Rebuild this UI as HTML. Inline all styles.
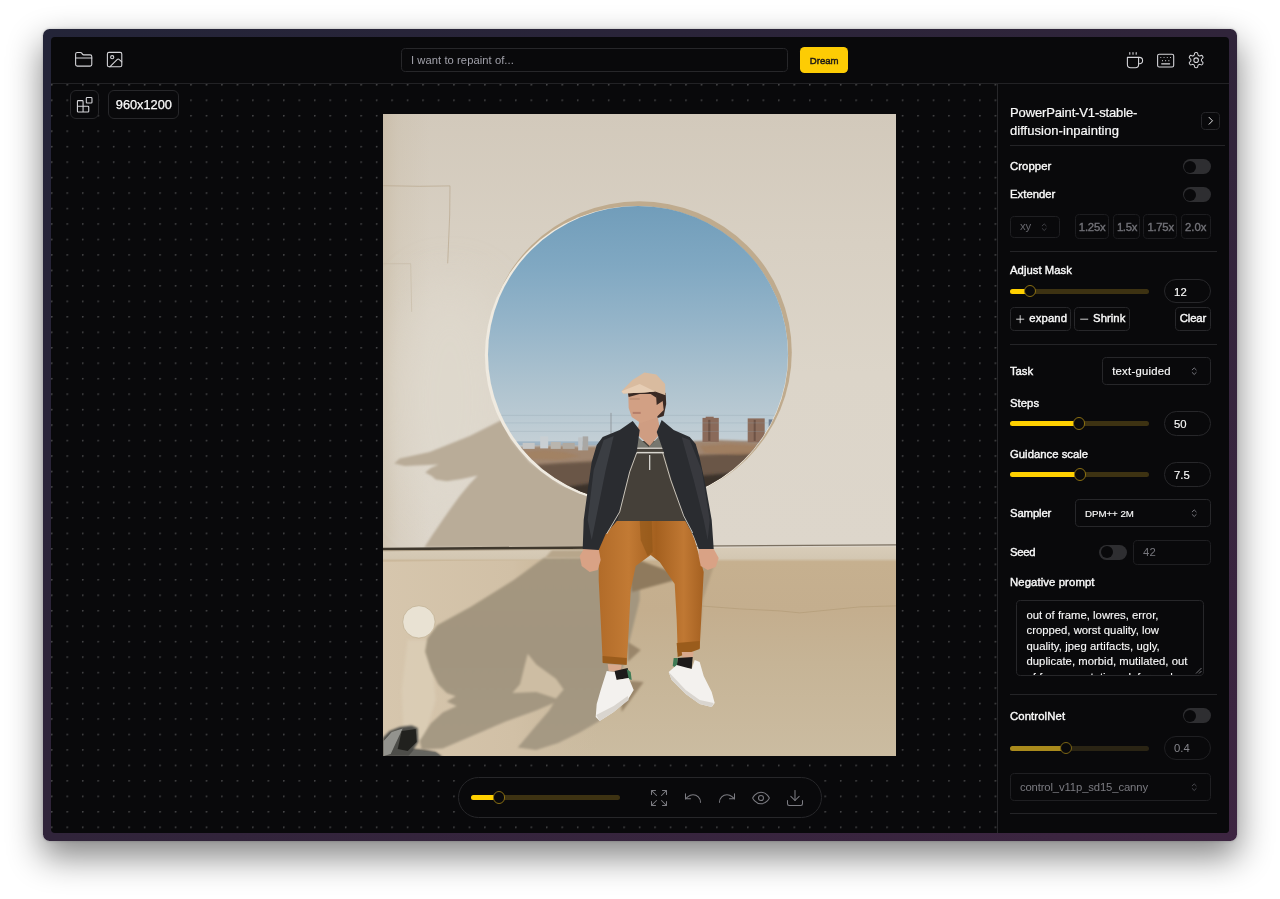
<!DOCTYPE html>
<html lang="en"><head><meta charset="utf-8"><title>IOPaint</title>
<style>
html,body{margin:0;padding:0;background:#fff}
body{width:1280px;height:899px;position:relative;overflow:hidden;font-family:"Liberation Sans", Arial, sans-serif;}
.b,.t,.i{position:absolute;box-sizing:border-box}
.t{white-space:nowrap;line-height:1}
#frame{position:absolute;left:43.1px;top:29.1px;width:1193.8px;height:812.4px;border-radius:6.5px;
 background:linear-gradient(to bottom right,#232438 0%,#30243a 50%,#3d2541 100%);
 box-shadow:0 15px 34px 1px rgba(0,0,0,.48),0 0 3px rgba(0,0,0,.22)}
#app{position:absolute;left:51.1px;top:37.2px;width:1177.8px;height:796.2px;border-radius:4px;background:#09090b;overflow:hidden}
#w{position:absolute;left:-51.1px;top:-37.2px;width:1280px;height:899px;will-change:transform}
#dots{position:absolute;left:50.8px;top:83.5px;width:947px;height:751px;
 background-image:radial-gradient(circle at 0.8px 0.8px,rgba(255,255,255,.34) 0,rgba(255,255,255,.24) .55px,rgba(255,255,255,0) 1.1px);
 background-size:15.48px 15.48px}
</style></head><body>
<div id="frame"></div>
<div id="app"><div id="w">
<div id="dots"></div>

<div class="b" style="left:51.00px;top:83.00px;width:1178.00px;height:1.0px;background:#222225"></div>
<svg class="i" style="left:73.90px;top:49.90px" width="19.4" height="19.4" viewBox="0 0 24 24" fill="none" stroke="#d6d6da" stroke-width="1.35" stroke-linecap="round" stroke-linejoin="round"><path d="M20 20a2 2 0 0 0 2-2V8a2 2 0 0 0-2-2h-7.9a2 2 0 0 1-1.69-.9L9.6 3.9A2 2 0 0 0 7.93 3H4a2 2 0 0 0-2 2v13a2 2 0 0 0 2 2Z"/><path d="M2 10h20"/></svg>
<svg class="i" style="left:105.00px;top:50.30px" width="19.2" height="19.2" viewBox="0 0 24 24" fill="none" stroke="#d6d6da" stroke-width="1.35" stroke-linecap="round" stroke-linejoin="round"><rect width="18" height="18" x="3" y="3" rx="2" ry="2"/><circle cx="9" cy="9" r="2"/><path d="m21 15-3.086-3.086a2 2 0 0 0-2.828 0L6 21"/></svg>
<div class="b" style="left:401.00px;top:47.60px;width:386.50px;height:24.80px;border-radius:4.6px;border:0.8px solid #27272a;background:#09090b;"></div>
<span class="t" id="ph" style="left:411.00px;top:55.12px;font-size:11.2px;color:#a1a1aa;letter-spacing:0.066px;font-weight:400;">I want to repaint of...</span>
<div class="b" style="left:799.90px;top:47.20px;width:48.20px;height:25.40px;border-radius:4.6px;border:0px solid #fdcc04;background:#fdcc04;"></div>
<span class="t" id="dream" style="left:809.80px;top:55.57px;font-size:9.6px;color:#1c1917;letter-spacing:0.001px;font-weight:400;-webkit-text-stroke:0.45px #1c1917;">Dream</span>
<svg class="i" style="left:1124.70px;top:50.60px" width="19.2" height="19.2" viewBox="0 0 24 24" fill="none" stroke="#d6d6da" stroke-width="1.35" stroke-linecap="round" stroke-linejoin="round"><path d="M17 8h1a4 4 0 1 1 0 8h-1"/><path d="M3 8h14v9a4 4 0 0 1-4 4H7a4 4 0 0 1-4-4Z"/><path d="M6 2v2M10 2v2M14 2v2"/></svg>
<svg class="i" style="left:1155.95px;top:50.55px" width="19.3" height="19.3" viewBox="0 0 24 24" fill="none" stroke="#d6d6da" stroke-width="1.35" stroke-linecap="round" stroke-linejoin="round"><rect width="20" height="16" x="2" y="4" rx="2"/><path d="M6 8h.01M10 8h.01M14 8h.01M18 8h.01M8 12h.01M12 12h.01M16 12h.01M7 16h10"/></svg>
<svg class="i" style="left:1187.15px;top:50.75px" width="18.3" height="18.3" viewBox="0 0 24 24" fill="none" stroke="#d6d6da" stroke-width="1.35" stroke-linecap="round" stroke-linejoin="round"><path d="M12.22 2h-.44a2 2 0 0 0-2 2v.18a2 2 0 0 1-1 1.73l-.43.25a2 2 0 0 1-2 0l-.15-.08a2 2 0 0 0-2.73.73l-.22.38a2 2 0 0 0 .73 2.73l.15.1a2 2 0 0 1 1 1.72v.51a2 2 0 0 1-1 1.74l-.15.09a2 2 0 0 0-.73 2.73l.22.38a2 2 0 0 0 2.73.73l.15-.08a2 2 0 0 1 2 0l.43.25a2 2 0 0 1 1 1.73V20a2 2 0 0 0 2 2h.44a2 2 0 0 0 2-2v-.18a2 2 0 0 1 1-1.73l.43-.25a2 2 0 0 1 2 0l.15.08a2 2 0 0 0 2.73-.73l.22-.39a2 2 0 0 0-.73-2.73l-.15-.08a2 2 0 0 1-1-1.74v-.5a2 2 0 0 1 1-1.74l.15-.09a2 2 0 0 0 .73-2.73l-.22-.38a2 2 0 0 0-2.73-.73l-.15.08a2 2 0 0 1-2 0l-.43-.25a2 2 0 0 1-1-1.73V4a2 2 0 0 0-2-2z"/><circle cx="12" cy="12" r="3"/></svg>
<div class="b" style="left:70.10px;top:90.10px;width:28.70px;height:28.90px;border-radius:6px;border:0.8px solid #27272a;background:#09090b;"></div>
<svg class="i" style="left:74.70px;top:94.80px" width="19.4" height="19.4" viewBox="0 0 24 24" fill="none" stroke="#d6d6da" stroke-width="1.35" stroke-linecap="round" stroke-linejoin="round"><rect width="7" height="7" x="14" y="3" rx="1"/><path d="M10 21V8a1 1 0 0 0-1-1H4a1 1 0 0 0-1 1v12a1 1 0 0 0 1 1h12a1 1 0 0 0 1-1v-5a1 1 0 0 0-1-1H3"/></svg>
<div class="b" style="left:108.10px;top:90.10px;width:71.10px;height:28.90px;border-radius:6px;border:0.8px solid #27272a;background:#09090b;"></div>
<span class="t" id="size" style="left:115.80px;top:98.76px;font-size:12.8px;color:#fafafa;letter-spacing:-0.014px;font-weight:400;-webkit-text-stroke:0.25px #fafafa;">960x1200</span>
<svg class="i" id="photo" style="left:383.3px;top:114.1px" width="513.1" height="642.2" viewBox="383.3 114.1 513.1 642.2" preserveAspectRatio="none">
<defs>
<linearGradient id="gsky" gradientUnits="userSpaceOnUse" x1="0" y1="206" x2="0" y2="446">
 <stop offset="0" stop-color="#719dba"/><stop offset=".25" stop-color="#80a8c2"/><stop offset=".5" stop-color="#96b5c9"/><stop offset=".75" stop-color="#aec3cf"/><stop offset="1" stop-color="#c5d0d6"/></linearGradient>
<linearGradient id="gwall" gradientUnits="userSpaceOnUse" x1="0" y1="114" x2="0" y2="548">
 <stop offset="0" stop-color="#d2c9bb"/><stop offset=".3" stop-color="#d8d0c3"/><stop offset=".6" stop-color="#dcd5c9"/><stop offset="1" stop-color="#ddd6cb"/></linearGradient>
<linearGradient id="gwl" gradientUnits="userSpaceOnUse" x1="383" y1="0" x2="430" y2="0">
 <stop offset="0" stop-color="#bfae92" stop-opacity=".42"/><stop offset=".35" stop-color="#c6b8a0" stop-opacity=".22"/><stop offset="1" stop-color="#c6b8a0" stop-opacity="0"/></linearGradient>
<linearGradient id="glow" gradientUnits="userSpaceOnUse" x1="0" y1="548" x2="0" y2="757">
 <stop offset="0" stop-color="#d8ccb8"/><stop offset=".05" stop-color="#d3c7b2"/><stop offset=".066" stop-color="#c6b08f"/><stop offset=".3" stop-color="#c4ae8e"/><stop offset=".55" stop-color="#c6b496"/><stop offset="1" stop-color="#cbbca1"/></linearGradient>
<linearGradient id="gshl" gradientUnits="userSpaceOnUse" x1="0" y1="548" x2="0" y2="757">
 <stop offset="0" stop-color="#a5977f"/><stop offset=".5" stop-color="#a2957f"/><stop offset="1" stop-color="#a69a84"/></linearGradient>
<linearGradient id="gll" gradientUnits="userSpaceOnUse" x1="383" y1="0" x2="600" y2="0">
 <stop offset="0" stop-color="#d6c6ad"/><stop offset=".6" stop-color="#d1c0a6"/><stop offset="1" stop-color="#cdbca2" stop-opacity="0"/></linearGradient>
<linearGradient id="gpants" gradientUnits="userSpaceOnUse" x1="596" y1="0" x2="706" y2="0">
 <stop offset="0" stop-color="#b06a28"/><stop offset=".3" stop-color="#c27a34"/><stop offset=".55" stop-color="#a4601f"/><stop offset=".8" stop-color="#c07833"/><stop offset="1" stop-color="#a25e1f"/></linearGradient>
<clipPath id="ccirc"><ellipse cx="638.3" cy="354.5" rx="150" ry="148.5"/></clipPath>
<clipPath id="cphoto"><rect x="383.3" y="114.1" width="513.1" height="642.2"/></clipPath>
<filter id="b1" x="-10%" y="-10%" width="120%" height="120%"><feGaussianBlur stdDeviation="0.9"/></filter>
<filter id="b2" x="-10%" y="-10%" width="120%" height="120%"><feGaussianBlur stdDeviation="1.8"/></filter>
<filter id="b6" x="-60%" y="-60%" width="220%" height="220%"><feGaussianBlur stdDeviation="22"/></filter>
</defs>
<g clip-path="url(#cphoto)">
<!-- upper wall -->
<rect x="383" y="114" width="514" height="436" fill="url(#gwall)"/>
<rect x="383" y="114" width="50" height="436" fill="url(#gwl)"/>
<ellipse cx="450" cy="400" rx="60" ry="120" fill="#e0dacf" opacity=".6" filter="url(#b6)"/>
<!-- plaster patch lines -->
<path d="M383.500 185.800 420 186.400 450.300 186 450 215 448 263.500" fill="none" stroke="#b9a88f" stroke-width=".9" opacity=".8"/>
<path d="M383.500 263.800H411L412 312" fill="none" stroke="#c4b7a2" stroke-width=".8" opacity=".7"/>
<!-- shadow on the upper wall (person + cap) -->
<polygon filter="url(#b1)" fill="#b9ac98" points="503.0,419.5 470.0,436.0 430.0,452.0 400.0,458.5 394.5,463.5 405.0,466.0 439.0,464.5 431.0,468.0 425.5,472.5 432.0,476.0 436.0,479.5 447.0,481.3 462.0,479.0 478.0,475.5 470.0,484.0 460.0,496.0 445.0,517.0 432.0,536.0 424.5,547.5 600.0,547.5 600.0,500.0 560.0,484.0 530.0,462.0 512.0,440.0"/>
<!-- round opening -->
<ellipse cx="639.5" cy="352.3" rx="152.6" ry="150.9" fill="#bfab8e"/>
<ellipse cx="636.8" cy="355.4" rx="151.6" ry="149.4" fill="#efeae0"/>
<ellipse cx="638.3" cy="354.5" rx="150" ry="148.5" fill="url(#gsky)"/>
<g clip-path="url(#ccirc)">
 <!-- distant water / haze -->
 <rect x="480" y="441.500" width="320" height="4" fill="#9fb4c4"/>
 <!-- trees -->
 <path filter="url(#b1)" fill="#a08670" d="M480 450 500 448 520 447 540 446 560 445.500 580 446.500 600 446 700 441 720 440 745 441 770 442 800 441V520H480Z"/>
 <path filter="url(#b2)" fill="#6b5746" d="M480 470 520 466 560 463 600 461 700 455 740 453 800 452V520H480Z"/>
 <path filter="url(#b2)" fill="#3a3129" d="M520 500 560 488 600 482 700 476 760 470V520H520Z"/>
 <path filter="url(#b1)" fill="#a3805f" d="M520 452 545 450 565 452 580 456 560 460 530 459Z" opacity=".7"/>
 <path filter="url(#b1)" fill="#a07c5c" d="M700 446 730 444 760 446 770 452 740 455 705 453Z" opacity=".7"/>
 <!-- buildings -->
 <rect x="702.800" y="418" width="16.300" height="24" fill="#8a6a5a"/><rect x="706" y="416.800" width="8" height="3" fill="#8a6a5a"/>
 <rect x="708.500" y="420" width="2.200" height="21" fill="#6d5245"/>
 <rect x="748" y="418.500" width="17" height="24" fill="#8c6d5c"/><rect x="754" y="420" width="2" height="21" fill="#6d5245"/>
 <rect x="769" y="419.500" width="5" height="18" fill="#6f7f93"/>
 <rect x="540.500" y="436.500" width="8" height="12" fill="#c9cfd3"/><rect x="551" y="442" width="10" height="7" fill="#b9b5ae"/>
 <rect x="578.500" y="437.500" width="4.500" height="13" fill="#bfc3c6"/><rect x="583" y="436.500" width="5.500" height="14" fill="#a9a7a4"/>
 <rect x="523" y="443" width="12" height="6" fill="#c5c6c6"/><rect x="563" y="443" width="12" height="6" fill="#b0a9a0"/>
 <!-- power lines -->
 <path d="M500 415.500H800M500 423H800M500 431.500H800" stroke="#8d9fae" stroke-width=".5" opacity=".55"/>
 <rect x="610.800" y="413" width="1" height="24" fill="#8a8f93" opacity=".8"/>
</g>
<!-- ledge + lower wall -->
<polygon points="383.0,550.2 897.0,546.6 897.0,757.0 383.0,757.0" fill="url(#glow)"/>
<!-- light left part of lower wall -->
<polygon points="383,561.5 600,560 600,757 383,757" fill="url(#gll)"/>
<path filter="url(#b2)" fill="#dccfb8" opacity=".75" d="M408 640 430 640 436 700 424 740 404 740 402 690Z"/>
<!-- lower wall big shadow -->
<path filter="url(#b1)" fill="url(#gshl)" d="M544 558 640 557 640 600 615 700 599 721.500 580 732.500 558.500 743 536.500 750 518 747.500 523.500 741 536.500 725.500 549.500 710.500 554 703 536.500 710.500 506 721.500 471 736.500 443 748.500 422 749.500 420 741 431 723.500 443 712.500 457 706 447 701.700 456 696.300 447 693 438.500 684.300 431 669 425.400 651.600 427.600 638.500 437.400 625.400 471.200 606.900 514.800 579.600Z"/>
<!-- light notch (bird shape) inside the shadow -->
<path filter="url(#b1)" fill="#cdbda3" d="M528 653.800 536.600 664.700 556.300 678.800 563.900 689.700 556.300 698.500 536.600 692 512.700 693 520.300 684.300 523.600 671.200Z"/>
<!-- shadows behind legs -->
<path filter="url(#b1)" fill="#8f7a5d" d="M628 556 672 572 676 580 632 592Z"/>
<path filter="url(#b1)" fill="#9a866a" d="M628 642 641 650 628 662Z"/>
<path filter="url(#b1)" fill="#9a866a" d="M620 680 644 682 622 712Z"/>
<path filter="url(#b1)" fill="#a08c70" d="M700 556 716 560 703 600 700 640Z" opacity=".55"/>
<!-- ledge line -->
<polygon points="383.0,547.8 600.0,546.4 600.0,548.9 383.0,550.4" fill="#3f382d"/>
<polygon points="383.0,550.4 600.0,548.9 600.0,549.8 383.0,551.4" fill="#9b8a70" opacity=".7"/>
<polygon points="690.0,545.6 897.0,544.4 897.0,545.7 690.0,546.9" fill="#7b7061"/>
<!-- crack on right lower wall -->
<path d="M700 606 740 609 780 611 800 613 830 610 860 607 897 606" fill="none" stroke="#b39c78" stroke-width="1" opacity=".7"/>
<!-- white plug -->
<circle cx="419.200" cy="622" r="16.200" fill="#e9e2d3"/>
<circle cx="419.200" cy="622" r="16.200" fill="none" stroke="#c3b296" stroke-width=".8"/>
<!-- bag -->
<path filter="url(#b1)" fill="#4e4e49" d="M383 757V738L390 731 400 727 412 725.500 418 728 418.500 742 414 749 425 750 436 752 443 757Z"/>
<path fill="#a0a09a" d="M384 741 392 732 403 728.500 398 739 391 754 384 756Z" opacity=".85"/>
<path fill="#1d1d1a" d="M402 731 416 729 417 742 408 751 398 749Z" opacity=".9"/>
<path fill="#6a6a65" d="M414 750 436 752.500 442 757 408 757Z" opacity=".8"/>
<!-- ledge strip in shadow -->
<polygon points="552,550.3 600,550 600,558 545,558.3" fill="#b7a68b" filter="url(#b1)"/>
<!-- ===== person ===== -->
<!-- pants -->
<path fill="url(#gpants)" d="M616 518 686 518 695 540 704 572 702 610 700 648 678 652 677 620 675 584 660 562 651 555 636 566 631 590 629 630 627 664 603 662 601 620 599 580 599 549 606 530Z"/>
<path fill="#8e5518" d="M640 520 652 520 653 552 648 556 641 540Z" opacity=".6"/>
<path fill="#9a5c1c" d="M603 656 627 658 627 665 603 663Z"/><path fill="#9a5c1c" d="M677 643 700 641 700 649 678 657Z"/>
<!-- ankles / socks -->
<path fill="#d9a98c" d="M608 664 622 665 621 672 609 671Z"/>
<path fill="#1d1b1a" d="M615 671 628 668 630 678 616 680Z"/>
<path fill="#d9a98c" d="M682 652 694 652 693 658 683 658Z"/>
<path fill="#1d1b1a" d="M678 658 693 657 692 669 677 667Z"/>
<path fill="#3f7a55" d="M674 658 678 658 677 668 673 666Z"/><path fill="#3f7a55" d="M627 669 631 672 632 680 629 679Z"/>
<!-- shoes -->
<path fill="#f3f1ee" d="M607 671 615 672 617 680 629 678 634 690 628 700 614 712 600 721 596 717 597 704 601 690Z"/>
<path fill="#d9d5cf" d="M596.500 715 614 706 628 696 629 700 614 712 600 721Z"/>
<path fill="#f3f1ee" d="M677 665 692 669 695 660 700 662 704 676 712 692 715 703 712 707 700 704 686 694 672 680 669 672Z"/>
<path fill="#d9d5cf" d="M669 672 686 690 700 700 714 703 712 707 700 704 686 694 672 680Z"/>
<!-- hands -->
<path fill="#d9a285" d="M584 549 599 549 601 560 598 570 590 572 582 566 580 556Z"/>
<path fill="#d9a285" d="M699 548 714 549 719 558 716 567 708 570 701 566 699 556Z"/>
<!-- inner shirt -->
<path fill="#454039" d="M630 441 670 441 680 480 692 521 612 521 624 480Z"/>
<path fill="#77776f" d="M634 433 649 447 664 432 668 447 633 447Z"/>
<rect x="636" y="447.500" width="30" height="1.500" fill="#d9d6cf"/><rect x="636" y="452" width="30" height="1.500" fill="#d9d6cf"/>
<!-- neck -->
<path fill="#cf9d82" d="M640 420 658 417 661 433 650 446 637 434Z"/>
<!-- jacket -->
<path fill="#2a2c30" d="M633 421 640 430 637 452 630 470 618 520 606 534 599 550 583 549 584 520 588 490 592 462 597 445 603 437 620 430Z"/>
<path fill="#2a2c30" d="M662 420 657 432 664 452 672 480 684 518 694 536 699 549 714 549 712 520 706 486 700 458 696 444 690 437 674 430Z"/>
<path fill="#43464b" d="M604 440 614 436 606 470 596 520 592 540 588 520 594 470Z" opacity=".7"/>
<path fill="#43464b" d="M690 440 682 437 694 480 704 520 708 540 710 520 702 470Z" opacity=".55"/>
<path d="M637 453 630 472 620 512 607 534" fill="none" stroke="#c9c4ba" stroke-width="1"/>
<path d="M663 453 671 480 684 516 693 533" fill="none" stroke="#c9c4ba" stroke-width="1"/>
<path d="M650 455V470" stroke="#e4e2dd" stroke-width="1.200"/>
<!-- head -->
<path fill="#3a2a24" d="M655 389 666 393 666.500 404 664 416 658 418 654 405Z"/>
<path fill="#d2a084" d="M628.500 392 656 390 657 405 663 401 664 410 656 418 641 423 632 417 629 408Z"/>
<path fill="#3a2a24" d="M628 392 640 391 656 391 657 398 651 394 640 394 629 397Z"/>
<path fill="#b98a70" d="M630 398 640 398 640 400 630 400Z" opacity=".7"/><path fill="#a86f5f" d="M633 412 641 412 641 414 633 414Z" opacity=".7"/>
<!-- cap -->
<path fill="#d9bb9f" d="M621.800 391.400 632.700 380 644.700 372.700 656.700 374.700 665.400 384 665.800 395.400 655.400 391.500 644.700 392.500 623.400 393.600Z"/>
<path fill="#e6cdb4" d="M621.800 391.400 640 384 655.400 391.500 644.700 392.500 623.400 393.600Z"/>
</g>
</svg>
<div class="b" style="left:458.10px;top:776.70px;width:363.50px;height:41.40px;border-radius:21px;border:0.8px solid #27272a;background:#09090b;"></div>
<div class="b" style="left:471.10px;top:795.20px;width:148.90px;height:4.8px;border-radius:4.8px;background:#3d3212"></div><div class="b" style="left:471.10px;top:795.20px;width:28.20px;height:4.8px;border-radius:4.8px 0 0 4.8px;background:#ffd000"></div><div class="b" style="left:493.10px;top:791.40px;width:12.4px;height:12.4px;border-radius:50%;border:1.1px solid #8a6f12;background:#09090b"></div>
<svg class="i" style="left:648.60px;top:787.70px" width="20" height="20" viewBox="0 0 24 24" fill="none" stroke="#7c7c82" stroke-width="1.25" stroke-linecap="round" stroke-linejoin="round"><path d="m21 21-6-6m6 6v-4.8m0 4.8h-4.8M3 16.200V21m0 0h4.8M3 21l6-6M21 7.800V3m0 0h-4.8M21 3l-6 6M3 7.800V3m0 0h4.8M3 3l6 6"/></svg>
<svg class="i" style="left:682.50px;top:787.70px" width="20" height="20" viewBox="0 0 24 24" fill="none" stroke="#7c7c82" stroke-width="1.25" stroke-linecap="round" stroke-linejoin="round"><path d="M3 7v6h6"/><path d="M21 17a9 9 0 0 0-9-9 9 9 0 0 0-6 2.300L3 13"/></svg>
<svg class="i" style="left:716.70px;top:787.70px" width="20" height="20" viewBox="0 0 24 24" fill="none" stroke="#7c7c82" stroke-width="1.25" stroke-linecap="round" stroke-linejoin="round"><path d="M21 7v6h-6"/><path d="M3 17a9 9 0 0 1 9-9 9 9 0 0 1 6 2.300l3 2.700"/></svg>
<svg class="i" style="left:750.60px;top:787.70px" width="20" height="20" viewBox="0 0 24 24" fill="none" stroke="#7c7c82" stroke-width="1.25" stroke-linecap="round" stroke-linejoin="round"><path d="M2 12s3-7 10-7 10 7 10 7-3 7-10 7-10-7-10-7Z"/><circle cx="12" cy="12" r="3"/></svg>
<svg class="i" style="left:784.70px;top:787.70px" width="20" height="20" viewBox="0 0 24 24" fill="none" stroke="#7c7c82" stroke-width="1.25" stroke-linecap="round" stroke-linejoin="round"><path d="M21 15v4a2 2 0 0 1-2 2H5a2 2 0 0 1-2-2v-4"/><path d="m7 10 5 5 5-5"/><path d="M12 15V3"/></svg>
<div class="b" style="left:997.2px;top:83.5px;width:232px;height:751px;background:#09090b;border-left:.9px solid #27272a"></div>
<span class="t" id="t1" style="left:1010.00px;top:105.90px;font-size:13px;color:#fafafa;letter-spacing:-0.136px;font-weight:400;-webkit-text-stroke:0.2px #fafafa;">PowerPaint-V1-stable-</span>
<span class="t" id="t2" style="left:1010.00px;top:124.10px;font-size:13px;color:#fafafa;letter-spacing:0.043px;font-weight:400;-webkit-text-stroke:0.2px #fafafa;">diffusion-inpainting</span>
<div class="b" style="left:1201.30px;top:111.60px;width:18.40px;height:18.40px;border-radius:4.6px;border:0.8px solid #27272a;background:transparent;"></div>
<svg class="i" style="left:1203.90px;top:114.20px" width="13.6" height="13.6" viewBox="0 0 24 24" fill="none" stroke="#fafafa" stroke-width="1.6" stroke-linecap="round" stroke-linejoin="round"><path d="m9 18 6-6-6-6"/></svg>
<div class="b" style="left:1010.00px;top:145.45px;width:215.30px;height:0.9px;background:#242427"></div>
<span class="t" id="cropper" style="left:1010.00px;top:161.13px;font-size:11.3px;color:#fafafa;letter-spacing:0.091px;font-weight:400;-webkit-text-stroke:0.38px #fafafa;">Cropper</span>
<div class="b" style="left:1182.50px;top:158.90px;width:28px;height:15.2px;border-radius:15.2px;background:#2e2e31"></div><div class="b" style="left:1184.10px;top:160.50px;width:12.0px;height:12.0px;border-radius:50%;background:#09090b"></div>
<span class="t" id="extender" style="left:1010.00px;top:189.23px;font-size:11.3px;color:#fafafa;letter-spacing:0.021px;font-weight:400;-webkit-text-stroke:0.38px #fafafa;">Extender</span>
<div class="b" style="left:1182.50px;top:186.90px;width:28px;height:15.2px;border-radius:15.2px;background:#2e2e31"></div><div class="b" style="left:1184.10px;top:188.50px;width:12.0px;height:12.0px;border-radius:50%;background:#09090b"></div>
<div class="b" style="left:1010.00px;top:215.90px;width:50.30px;height:21.90px;border-radius:4.6px;border:0.8px solid #1f1f22;background:transparent;"></div>
<span class="t" id="xy" style="left:1019.90px;top:221.23px;font-size:11.3px;color:#66666c;letter-spacing:0.000px;font-weight:400;">xy</span>
<svg class="i" style="left:1037.90px;top:220.80px" width="12.4" height="12.4" viewBox="0 0 15 15" fill="none" stroke="#4a4a50" stroke-width="1.0" stroke-linecap="round" stroke-linejoin="round"><path d="M5.1 5.9 7.5 3.5 9.9 5.9M5.1 9.1 7.5 11.5 9.9 9.1"/></svg>
<div class="b" style="left:1074.70px;top:214.40px;width:34.70px;height:24.70px;border-radius:4.6px;border:0.8px solid #1d1d20;background:transparent;"></div>
<span class="t" id="b125" style="left:1078.80px;top:222.13px;font-size:11.3px;color:#727278;letter-spacing:-0.200px;font-weight:400;-webkit-text-stroke:0.38px #727278;">1.25x</span>
<div class="b" style="left:1112.60px;top:214.40px;width:27.70px;height:24.70px;border-radius:4.6px;border:0.8px solid #1d1d20;background:transparent;"></div>
<span class="t" id="b15" style="left:1116.90px;top:222.13px;font-size:11.3px;color:#727278;letter-spacing:-0.300px;font-weight:400;-webkit-text-stroke:0.38px #727278;">1.5x</span>
<div class="b" style="left:1143.10px;top:214.40px;width:34.30px;height:24.70px;border-radius:4.6px;border:0.8px solid #1d1d20;background:transparent;"></div>
<span class="t" id="b175" style="left:1147.40px;top:222.13px;font-size:11.3px;color:#727278;letter-spacing:-0.250px;font-weight:400;-webkit-text-stroke:0.38px #727278;">1.75x</span>
<div class="b" style="left:1180.60px;top:214.40px;width:30.00px;height:24.70px;border-radius:4.6px;border:0.8px solid #1d1d20;background:transparent;"></div>
<span class="t" id="b20" style="left:1185.00px;top:222.13px;font-size:11.3px;color:#727278;letter-spacing:0.000px;font-weight:400;-webkit-text-stroke:0.38px #727278;">2.0x</span>
<div class="b" style="left:1010.00px;top:251.45px;width:206.60px;height:0.9px;background:#242427"></div>
<span class="t" id="adjust" style="left:1010.00px;top:265.13px;font-size:11.3px;color:#fafafa;letter-spacing:0.037px;font-weight:400;-webkit-text-stroke:0.38px #fafafa;">Adjust Mask</span>
<div class="b" style="left:1010.00px;top:288.80px;width:139.10px;height:4.8px;border-radius:4.8px;background:#3d3212"></div><div class="b" style="left:1010.00px;top:288.80px;width:20.20px;height:4.8px;border-radius:4.8px 0 0 4.8px;background:#ffd000"></div><div class="b" style="left:1024.00px;top:285.00px;width:12.4px;height:12.4px;border-radius:50%;border:1.1px solid #8a6f12;background:#09090b"></div>
<div class="b" style="left:1163.80px;top:279.00px;width:46.80px;height:24.40px;border-radius:12.3px;border:0.8px solid #27272a;background:transparent;"></div>
<span class="t" id="n12" style="left:1174.10px;top:286.53px;font-size:11.3px;color:#fafafa;letter-spacing:0.000px;font-weight:400;-webkit-text-stroke:0.15px #fafafa;">12</span>
<div class="b" style="left:1010.00px;top:306.60px;width:60.60px;height:24.70px;border-radius:4.6px;border:0.8px solid #27272a;background:transparent;"></div>
<svg class="i" style="left:1013.80px;top:312.70px" width="12.4" height="12.4" viewBox="0 0 24 24" fill="none" stroke="#fafafa" stroke-width="1.6" stroke-linecap="round" stroke-linejoin="round"><path d="M5 12h14M12 5v14"/></svg>
<span class="t" id="expandt" style="left:1029.30px;top:313.43px;font-size:11.3px;color:#fafafa;letter-spacing:0.144px;font-weight:400;-webkit-text-stroke:0.38px #fafafa;">expand</span>
<div class="b" style="left:1073.80px;top:306.60px;width:55.80px;height:24.70px;border-radius:4.6px;border:0.8px solid #27272a;background:transparent;"></div>
<svg class="i" style="left:1077.80px;top:312.70px" width="12.4" height="12.4" viewBox="0 0 24 24" fill="none" stroke="#fafafa" stroke-width="1.6" stroke-linecap="round" stroke-linejoin="round"><path d="M5 12h14"/></svg>
<span class="t" id="shrink" style="left:1093.10px;top:313.43px;font-size:11.3px;color:#fafafa;letter-spacing:0.046px;font-weight:400;-webkit-text-stroke:0.38px #fafafa;">Shrink</span>
<div class="b" style="left:1175.40px;top:306.60px;width:35.20px;height:24.70px;border-radius:4.6px;border:0.8px solid #27272a;background:transparent;"></div>
<span class="t" id="clear" style="left:1179.70px;top:313.43px;font-size:11.3px;color:#fafafa;letter-spacing:-0.108px;font-weight:400;-webkit-text-stroke:0.38px #fafafa;">Clear</span>
<div class="b" style="left:1010.00px;top:343.95px;width:206.60px;height:0.9px;background:#242427"></div>
<span class="t" id="task" style="left:1010.00px;top:365.83px;font-size:11.3px;color:#fafafa;letter-spacing:-0.060px;font-weight:400;-webkit-text-stroke:0.38px #fafafa;">Task</span>
<div class="b" style="left:1102.30px;top:357.20px;width:108.30px;height:27.60px;border-radius:4.6px;border:0.8px solid #27272a;background:transparent;"></div>
<span class="t" id="tg" style="left:1112.20px;top:365.83px;font-size:11.3px;color:#fafafa;letter-spacing:0.249px;font-weight:400;-webkit-text-stroke:0.15px #fafafa;">text-guided</span>
<svg class="i" style="left:1187.90px;top:364.80px" width="12.4" height="12.4" viewBox="0 0 15 15" fill="none" stroke="#8b8b92" stroke-width="1.0" stroke-linecap="round" stroke-linejoin="round"><path d="M5.1 5.9 7.5 3.5 9.9 5.9M5.1 9.1 7.5 11.5 9.9 9.1"/></svg>
<span class="t" id="steps" style="left:1010.00px;top:397.73px;font-size:11.3px;color:#fafafa;letter-spacing:0.040px;font-weight:400;-webkit-text-stroke:0.38px #fafafa;">Steps</span>
<div class="b" style="left:1010.00px;top:421.10px;width:139.10px;height:4.8px;border-radius:4.8px;background:#3d3212"></div><div class="b" style="left:1010.00px;top:421.10px;width:68.90px;height:4.8px;border-radius:4.8px 0 0 4.8px;background:#ffd000"></div><div class="b" style="left:1072.70px;top:417.30px;width:12.4px;height:12.4px;border-radius:50%;border:1.1px solid #8a6f12;background:#09090b"></div>
<div class="b" style="left:1163.80px;top:411.00px;width:46.80px;height:24.60px;border-radius:12.3px;border:0.8px solid #27272a;background:transparent;"></div>
<span class="t" id="n50" style="left:1174.00px;top:418.73px;font-size:11.3px;color:#fafafa;letter-spacing:0.000px;font-weight:400;-webkit-text-stroke:0.15px #fafafa;">50</span>
<span class="t" id="guid" style="left:1010.00px;top:448.73px;font-size:11.3px;color:#fafafa;letter-spacing:0.016px;font-weight:400;-webkit-text-stroke:0.38px #fafafa;">Guidance scale</span>
<div class="b" style="left:1010.00px;top:472.25px;width:139.10px;height:4.8px;border-radius:4.8px;background:#3d3212"></div><div class="b" style="left:1010.00px;top:472.25px;width:69.80px;height:4.8px;border-radius:4.8px 0 0 4.8px;background:#ffd000"></div><div class="b" style="left:1073.60px;top:468.45px;width:12.4px;height:12.4px;border-radius:50%;border:1.1px solid #8a6f12;background:#09090b"></div>
<div class="b" style="left:1163.80px;top:462.20px;width:46.80px;height:24.50px;border-radius:12.3px;border:0.8px solid #27272a;background:transparent;"></div>
<span class="t" id="n75" style="left:1174.00px;top:469.93px;font-size:11.3px;color:#fafafa;letter-spacing:0.000px;font-weight:400;-webkit-text-stroke:0.15px #fafafa;">7.5</span>
<span class="t" id="sampler" style="left:1010.00px;top:508.23px;font-size:11.3px;color:#fafafa;letter-spacing:-0.117px;font-weight:400;-webkit-text-stroke:0.38px #fafafa;">Sampler</span>
<div class="b" style="left:1075.30px;top:499.30px;width:135.30px;height:27.60px;border-radius:4.6px;border:0.8px solid #27272a;background:transparent;"></div>
<span class="t" id="dpm" style="left:1085.00px;top:508.79px;font-size:9.7px;color:#fafafa;letter-spacing:-0.024px;font-weight:400;-webkit-text-stroke:0.15px #fafafa;">DPM++ 2M</span>
<svg class="i" style="left:1187.90px;top:506.90px" width="12.4" height="12.4" viewBox="0 0 15 15" fill="none" stroke="#8b8b92" stroke-width="1.0" stroke-linecap="round" stroke-linejoin="round"><path d="M5.1 5.9 7.5 3.5 9.9 5.9M5.1 9.1 7.5 11.5 9.9 9.1"/></svg>
<span class="t" id="seed" style="left:1010.00px;top:546.73px;font-size:11.3px;color:#fafafa;letter-spacing:-0.267px;font-weight:400;-webkit-text-stroke:0.38px #fafafa;">Seed</span>
<div class="b" style="left:1099.00px;top:544.60px;width:28px;height:15.2px;border-radius:15.2px;background:#2e2e31"></div><div class="b" style="left:1100.60px;top:546.20px;width:12.0px;height:12.0px;border-radius:50%;background:#09090b"></div>
<div class="b" style="left:1133.20px;top:539.60px;width:77.40px;height:25.20px;border-radius:4.6px;border:0.8px solid #1f1f22;background:transparent;"></div>
<span class="t" id="n42" style="left:1143.10px;top:547.13px;font-size:11.3px;color:#77777d;letter-spacing:0.000px;font-weight:400;">42</span>
<span class="t" id="neg" style="left:1010.00px;top:577.33px;font-size:11.3px;color:#fafafa;letter-spacing:0.111px;font-weight:400;-webkit-text-stroke:0.38px #fafafa;">Negative prompt</span>
<div class="b" style="left:1016.2px;top:600.3px;width:187.9px;height:75.4px;border-radius:4.6px;border:.8px solid #27272a;overflow:hidden">
<span class="t" id="l1" style="left:9.30px;top:8.23px;font-size:11.3px;color:#fafafa;letter-spacing:0.003px;font-weight:400;-webkit-text-stroke:0.12px #fafafa;">out of frame, lowres, error,</span>
<span class="t" id="l2" style="left:9.30px;top:23.73px;font-size:11.3px;color:#fafafa;letter-spacing:0.007px;font-weight:400;-webkit-text-stroke:0.12px #fafafa;">cropped, worst quality, low</span>
<span class="t" id="l3" style="left:9.30px;top:39.23px;font-size:11.3px;color:#fafafa;letter-spacing:0.062px;font-weight:400;-webkit-text-stroke:0.12px #fafafa;">quality, jpeg artifacts, ugly,</span>
<span class="t" id="l4" style="left:9.30px;top:54.73px;font-size:11.3px;color:#fafafa;letter-spacing:0.025px;font-weight:400;-webkit-text-stroke:0.12px #fafafa;">duplicate, morbid, mutilated, out</span>
<span class="t" id="l5" style="left:9.30px;top:70.23px;font-size:11.3px;color:#fafafa;letter-spacing:0.042px;font-weight:400;-webkit-text-stroke:0.12px #fafafa;">of frame, mutation, deformed</span>
<svg class="i" style="right:1px;bottom:1px" width="7" height="7" viewBox="0 0 7 7" stroke="#8a8a90" stroke-width=".8" fill="none"><path d="M6.500 1 1 6.500M6.500 4 4 6.500"/></svg>
</div>
<div class="b" style="left:1010.00px;top:693.85px;width:206.60px;height:0.9px;background:#242427"></div>
<span class="t" id="cnet" style="left:1010.00px;top:710.63px;font-size:11.3px;color:#fafafa;letter-spacing:0.116px;font-weight:400;-webkit-text-stroke:0.38px #fafafa;">ControlNet</span>
<div class="b" style="left:1182.50px;top:708.00px;width:28px;height:15.2px;border-radius:15.2px;background:#2e2e31"></div><div class="b" style="left:1184.10px;top:709.60px;width:12.0px;height:12.0px;border-radius:50%;background:#09090b"></div>
<div class="b" style="left:1010.00px;top:745.80px;width:139.10px;height:4.8px;border-radius:4.8px;background:#2a2414"></div><div class="b" style="left:1010.00px;top:745.80px;width:56.00px;height:4.8px;border-radius:4.8px 0 0 4.8px;background:#a98a1c"></div><div class="b" style="left:1059.80px;top:742.00px;width:12.4px;height:12.4px;border-radius:50%;border:1.1px solid #7a6414;background:#09090b"></div>
<div class="b" style="left:1163.80px;top:735.70px;width:46.80px;height:24.60px;border-radius:12.3px;border:0.8px solid #1f1f22;background:transparent;"></div>
<span class="t" id="n04" style="left:1174.00px;top:743.03px;font-size:11.3px;color:#85858b;letter-spacing:0.000px;font-weight:400;">0.4</span>
<div class="b" style="left:1010.00px;top:773.20px;width:200.60px;height:27.40px;border-radius:4.6px;border:0.8px solid #1f1f22;background:transparent;"></div>
<span class="t" id="cn" style="left:1019.90px;top:781.83px;font-size:11.3px;color:#7b7b81;letter-spacing:-0.132px;font-weight:400;">control_v11p_sd15_canny</span>
<svg class="i" style="left:1187.90px;top:780.80px" width="12.4" height="12.4" viewBox="0 0 15 15" fill="none" stroke="#55555b" stroke-width="1.0" stroke-linecap="round" stroke-linejoin="round"><path d="M5.1 5.9 7.5 3.5 9.9 5.9M5.1 9.1 7.5 11.5 9.9 9.1"/></svg>
<div class="b" style="left:1010.00px;top:813.05px;width:206.60px;height:0.9px;background:#242427"></div>
</div></div>
</body></html>
